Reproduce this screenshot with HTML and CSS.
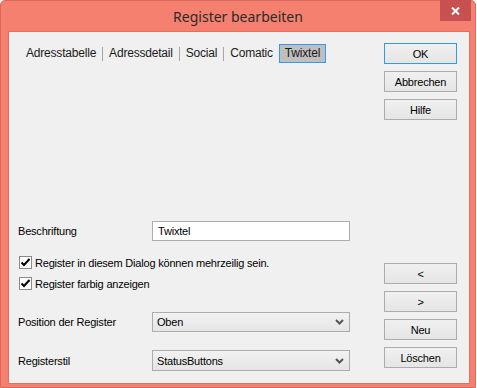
FILE: index.html
```html
<!DOCTYPE html>
<html lang="de">
<head>
<meta charset="utf-8">
<title>Register bearbeiten</title>
<link rel="stylesheet" href="styles.css">
</head>
<body>
<div class="window">
  <div class="titlebar">
    <span class="title">Register bearbeiten</span>
    <div class="close">
      <svg width="9" height="8" viewBox="0 0 9 8"><path d="M1 0.5 L8 7.5 M8 0.5 L1 7.5" stroke="#fff" stroke-width="2"/></svg>
    </div>
  </div>
  <div class="client">
    <div class="main">
      <div class="tabs">
        <span class="tab">Adresstabelle</span><span class="sep"></span>
        <span class="tab">Adressdetail</span><span class="sep"></span>
        <span class="tab">Social</span><span class="sep"></span>
        <span class="tab">Comatic</span>
        <span class="tab selected">Twixtel</span>
      </div>
      <div class="form">
        <div class="row">
          <span class="label">Beschriftung</span>
          <div class="textbox">Twixtel</div>
        </div>
        <div class="check-row first">
          <span class="checkbox"><svg width="13" height="13" viewBox="0 0 13 13"><path d="M2.5 6.5 L5 9 L10.5 3" fill="none" stroke="#000" stroke-width="2"/></svg></span>
          <span>Register in diesem Dialog können mehrzeilig sein.</span>
        </div>
        <div class="check-row second">
          <span class="checkbox"><svg width="13" height="13" viewBox="0 0 13 13"><path d="M2.5 6.5 L5 9 L10.5 3" fill="none" stroke="#000" stroke-width="2"/></svg></span>
          <span>Register farbig anzeigen</span>
        </div>
        <div class="row select-row pos">
          <span class="label">Position der Register</span>
          <div class="select"><span>Oben</span><svg width="9" height="6" viewBox="0 0 9 6"><path d="M1 1 L4.5 4.5 L8 1" fill="none" stroke="#555" stroke-width="2"/></svg></div>
        </div>
        <div class="row select-row style">
          <span class="label">Registerstil</span>
          <div class="select tall"><span>StatusButtons</span><svg width="9" height="6" viewBox="0 0 9 6"><path d="M1 1 L4.5 4.5 L8 1" fill="none" stroke="#555" stroke-width="2"/></svg></div>
        </div>
      </div>
    </div>
    <div class="side">
      <div class="group">
        <div class="btn default">OK</div>
        <div class="btn">Abbrechen</div>
        <div class="btn">Hilfe</div>
      </div>
      <div class="group lower">
        <div class="btn">&lt;</div>
        <div class="btn">&gt;</div>
        <div class="btn">Neu</div>
        <div class="btn">Löschen</div>
      </div>
    </div>
  </div>
</div>
</body>
</html>
```

FILE: styles.css
```css
html, body {
  margin: 0;
  padding: 0;
  background: #ffffff;
}

.window {
  width: 476px;
  height: 388px;
  box-sizing: border-box;
  border: 1px solid #d9695c;
  border-radius: 5px 5px 0 0;
  background: #f5806f;
  display: flex;
  flex-direction: column;
  font-family: "Liberation Sans", Arial, sans-serif;
  font-size: 11px;
  letter-spacing: -0.2px;
  color: #000;
}

.titlebar {
  position: relative;
  height: 30px;
  display: flex;
  align-items: center;
  justify-content: center;
}

.title {
  font-family: "Noto Sans", "Open Sans", sans-serif;
  font-size: 14px;
  letter-spacing: 0;
  color: #2b2b2b;
  margin-top: 1px;
}

.close {
  position: absolute;
  top: -1px;
  right: 4px;
  width: 31px;
  height: 21px;
  background: #c75050;
  display: flex;
  align-items: center;
  justify-content: center;
}

.client {
  flex: 1;
  margin: 0 5px 3px 7px;
  border: 1px solid #e0705f;
  background: #f0f0f0;
  display: flex;
  padding: 11px 12px 12px 9px;
}

.main {
  width: 332px;
  display: flex;
  flex-direction: column;
}

.tabs {
  margin-top: 1px;
  margin-left: 2px;
  display: flex;
  align-items: center;
  height: 19px;
}

.tab {
  padding: 0 6px;
  line-height: 19px;
  color: #1a1a1a;
  font-size: 12px;
  letter-spacing: -0.2px;
}

.tab.selected {
  box-sizing: border-box;
  height: 19px;
  line-height: 17px;
  padding: 0 5px;
  border: 1px solid #3399f0;
  background: #bfbfbf;
}

.sep {
  width: 1px;
  height: 14px;
  background: #a6a6a6;
}

.form {
  margin-top: auto;
  display: flex;
  flex-direction: column;
}

.row {
  display: flex;
  align-items: center;
}

.label {
  width: 134px;
}

.textbox {
  box-sizing: border-box;
  width: 198px;
  height: 20px;
  border: 1px solid #abadb3;
  background: #fff;
  padding: 0 5px;
  line-height: 18px;
}

.check-row {
  display: flex;
  align-items: center;
  height: 13px;
  padding-left: 1px;
}

.check-row.first { margin-top: 15px; }
.check-row.second { margin-top: 8px; }

.checkbox {
  box-sizing: border-box;
  width: 13px;
  height: 13px;
  border: 1px solid #8a8a8a;
  background: #fff;
  margin-right: 3px;
  display: flex;
}

.checkbox svg {
  margin: -1px;
}

.select-row.pos { margin-top: 22px; }
.select-row.style { margin-top: 18px; }

.select {
  box-sizing: border-box;
  width: 198px;
  height: 20px;
  border: 1px solid #acacac;
  background: linear-gradient(#f2f2f2, #e5e5e5);
  display: flex;
  align-items: center;
  justify-content: space-between;
  padding: 0 5px 0 4px;
}

.select.tall { height: 21px; }

.side {
  margin-left: 34px;
  width: 73px;
  display: flex;
  flex-direction: column;
  justify-content: space-between;
}

.group {
  display: flex;
  flex-direction: column;
  gap: 7px;
}

.group.lower {
  margin-bottom: 3px;
}

.btn {
  box-sizing: border-box;
  height: 21px;
  border: 1px solid #acacac;
  background: linear-gradient(#f0f0f0, #e5e5e5);
  display: flex;
  align-items: center;
  justify-content: center;
}

.btn.default {
  border-color: #3399f0;
}
```
